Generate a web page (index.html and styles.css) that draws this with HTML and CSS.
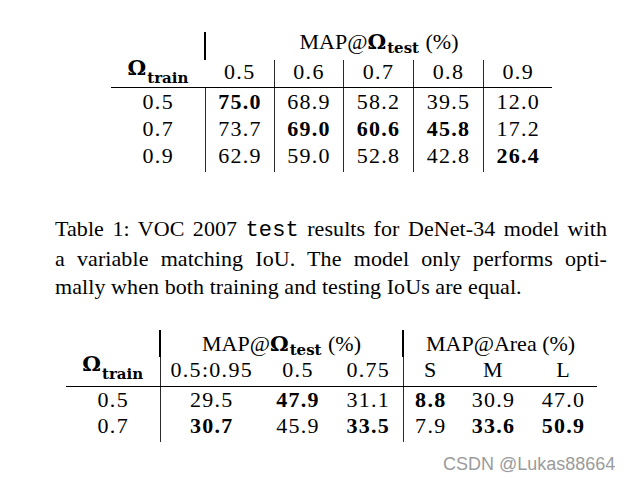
FILE: index.html
```html
<!DOCTYPE html>
<html>
<head>
<meta charset="utf-8">
<link rel="stylesheet" href="styles.css">
</head>
<body>
<div class="page">
  <table class="t1">
    <colgroup>
      <col class="w94"><col class="w69"><col class="w69"><col class="w70"><col class="w70"><col class="w69">
    </colgroup>
    <tr class="h1">
      <td></td>
      <td colspan="5" class="grp">MAP@<span class="om">Ω</span><sub class="sb">test</sub> (%)</td>
    </tr>
    <tr class="h2">
      <td class="lab"><span class="om">Ω</span><sub class="sb">train</sub></td>
      <td>0.5</td><td class="vl">0.6</td><td class="vl">0.7</td><td class="vl">0.8</td><td class="vl">0.9</td>
    </tr>
    <tr class="r1">
      <td>0.5</td><td class="vl b">75.0</td><td class="vl">68.9</td><td class="vl">58.2</td><td class="vl">39.5</td><td class="vl">12.0</td>
    </tr>
    <tr class="r2">
      <td>0.7</td><td class="vl">73.7</td><td class="vl b">69.0</td><td class="vl b">60.6</td><td class="vl b">45.8</td><td class="vl">17.2</td>
    </tr>
    <tr class="r3">
      <td>0.9</td><td class="vl">62.9</td><td class="vl">59.0</td><td class="vl">52.8</td><td class="vl">42.8</td><td class="vl b">26.4</td>
    </tr>
  </table>

  <div class="cap">
    <span class="ln j">Table 1: VOC 2007 <span class="tt">test</span> results for DeNet-34 model with</span>
    <span class="ln j">a variable matching IoU. The model only performs opti-</span>
    <span class="ln">mally when both training and testing IoUs are equal.</span>
  </div>

  <table class="t2">
    <colgroup>
      <col class="w94"><col class="w102"><col class="w71"><col class="w70"><col class="w54"><col class="w72"><col class="w68">
    </colgroup>
    <tr class="h1">
      <td></td>
      <td colspan="3" class="grp">MAP@<span class="om">Ω</span><sub class="sb">test</sub> (%)</td>
      <td colspan="3" class="grp">MAP@Area (%)</td>
    </tr>
    <tr class="h2">
      <td class="lab"><span class="om">Ω</span><sub class="sb">train</sub></td>
      <td class="vl">0.5:0.95</td><td>0.5</td><td>0.75</td>
      <td class="vl">S</td><td>M</td><td>L</td>
    </tr>
    <tr class="r1">
      <td>0.5</td>
      <td class="vl">29.5</td><td class="b">47.9</td><td>31.1</td>
      <td class="vl b">8.8</td><td>30.9</td><td>47.0</td>
    </tr>
    <tr class="r2">
      <td>0.7</td>
      <td class="vl b">30.7</td><td>45.9</td><td class="b">33.5</td>
      <td class="vl">7.9</td><td class="b">33.6</td><td class="b">50.9</td>
    </tr>
  </table>

  <div class="wm">CSDN @Lukas88664</div>
</div>
</body>
</html>
```

FILE: styles.css
```css
html, body {
  margin: 0;
  padding: 0;
  background: #fff;
}
body {
  font-family: "Liberation Serif", serif;
  color: #000;
}
.page {
  position: relative;
  width: 634px;
  height: 479px;
  padding-top: 32px;
  box-sizing: border-box;
  overflow: hidden;
}
table {
  border-collapse: collapse;
  border-spacing: 0;
  table-layout: fixed;
  font-family: "Liberation Serif", serif;
  font-size: 22px;
}
td {
  padding: 0;
  text-align: center;
  white-space: nowrap;
  vertical-align: middle;
  letter-spacing: 1.3px;
  text-indent: 1px;
  overflow: visible;
}
.grp, .lab {
  letter-spacing: 0;
  text-indent: 0;
}
.w94 { width: 94px; }
.w102 { width: 102px; }
.w72 { width: 72px; }
.w71 { width: 71px; }
.w70 { width: 70px; }
.w69 { width: 69px; }
.w68 { width: 68px; }
.w54 { width: 54px; }

.b { font-weight: bold; }
.vl { border-left: 1px solid #2a2a2a; }
.grp { border-left: 2px solid #000; }
.h2 td { border-bottom: 1px solid #000; }

.om {
  font-family: "DejaVu Serif", serif;
  font-weight: bold;
  font-size: 21px;
  line-height: 0;
  margin-right: 1px;
}
.sb {
  font-family: "DejaVu Serif", serif;
  font-weight: bold;
  font-size: 15px;
  vertical-align: -4px;
  line-height: 0;
}
.grp .sb { margin-right: 1px; }

/* table 1 */
.t1 {
  margin-left: 111px;
  width: 441px;
}
.t1 .h1 td { height: 20px; line-height: 20px; padding-bottom: 8px; }
.t1 .h2 td { height: 23px; line-height: 23px; padding-bottom: 4px; }
.t1 .lab .om { vertical-align: 4px; }
.t1 .lab .sb { vertical-align: -4px; }
.t1 .r1 td, .t1 .r2 td { height: 27px; line-height: 27px; }
.t1 .r3 td { height: 27px; line-height: 27px; padding-bottom: 3px; }

/* caption */
.cap {
  margin: 43px 0 0 55px;
  width: 552px;
  font-size: 22px;
  line-height: 28px;
  letter-spacing: 0.08px;
}
.ln { display: block; white-space: nowrap; }
.j { text-align: justify; text-align-last: justify; }
.tt {
  font-family: "Liberation Mono", monospace;
  font-size: 22px;
}

/* table 2 */
.t2 {
  margin-top: 29px;
  margin-left: 66px;
  width: 531px;
}
.t2 .h1 td { height: 27px; line-height: 27px; }
.t2 .h2 td { height: 26px; line-height: 26px; padding-bottom: 3px; }
.t2 .lab .om { vertical-align: 6px; }
.t2 .lab .sb { vertical-align: -2px; }
.t2 .r1 td { height: 25px; line-height: 25px; }
.t2 .r2 td { height: 27px; line-height: 27px; padding-bottom: 3px; }

.wm {
  position: absolute;
  left: 443px;
  top: 454px;
  font-family: "Liberation Sans", sans-serif;
  font-size: 18px;
  line-height: 20px;
  color: #9b9b9b;
}
```
